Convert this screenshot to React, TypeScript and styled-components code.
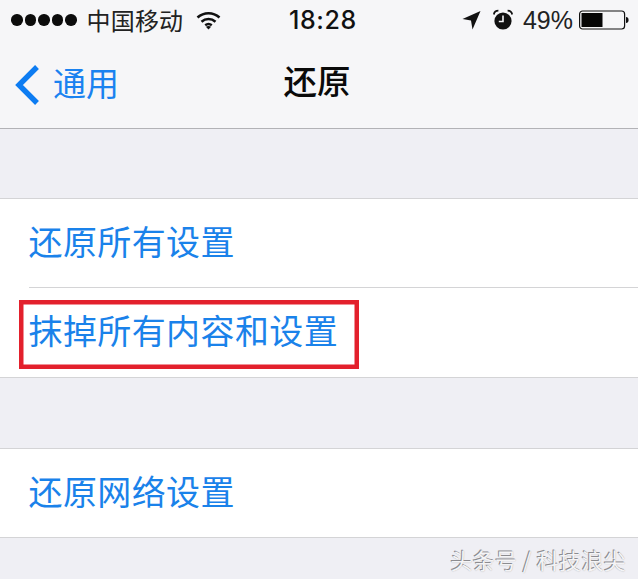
import React from "react";
import styled, { createGlobalStyle } from "styled-components";

const cjk = `"Noto Sans CJK SC", "Noto Sans", sans-serif`;

const Global = createGlobalStyle`
  html, body { margin: 0; padding: 0; background: #efeff4; }
  body { width: 638px; height: 579px; overflow: hidden; font-family: ${cjk}; }
`;

const Page = styled.div`
  position: relative;
  width: 638px;
  height: 579px;
  background: #efeff4;
  display: flex;
  flex-direction: column;
`;

const Header = styled.header`
  height: 128px;
  background: #f6f6f8;
  border-bottom: 1px solid #b2b2b6;
  display: flex;
  flex-direction: column;
`;

const StatusBar = styled.div`
  height: 40px;
  display: grid;
  grid-template-columns: 278px auto 1fr;
  align-items: center;
  padding: 0 9px 0 11px;
  color: #111;
`;

const StatusLeft = styled.div`
  display: flex;
  align-items: center;
`;

const StatusRight = styled.div`
  display: flex;
  align-items: center;
  justify-content: flex-end;
`;

const Dots = styled.div`
  display: flex;
  gap: 2px;
  margin-right: 10px;
`;

const Dot = styled.span`
  width: 11.5px;
  height: 11.5px;
  border-radius: 50%;
  background: #0c0c0c;
`;

const Carrier = styled.span`
  font-size: 24px;
  line-height: 30px;
  letter-spacing: 0.2px;
  color: #222;
  margin-right: 13px;
`;

const Clock = styled.span`
  font-family: "Inter", "Liberation Sans", sans-serif;
  font-size: 25px;
  font-weight: 500;
  letter-spacing: 0.6px;
  color: #111;
`;

const Percent = styled.span`
  font-family: "Liberation Sans", sans-serif;
  font-size: 25px;
  color: #222;
  margin: 0 6px 0 10px;
`;

const NavBar = styled.nav`
  flex: 1;
  position: relative;
  display: flex;
  align-items: center;
  justify-content: center;
`;

const Back = styled.div`
  position: absolute;
  left: 11px;
  top: 23px;
  display: flex;
  align-items: center;
  gap: 13px;
  color: #1a82f0;
  font-size: 33px;
  line-height: 44px;
`;

const BackLabel = styled.span`
  position: relative;
  top: -3px;
`;

const Title = styled.h1`
  margin: 0 4px 8px 0;
  font-size: 33.5px;
  line-height: 44px;
  font-weight: 500;
  color: #0a0a0a;
`;

const Group = styled.section<{ $top: number }>`
  margin-top: ${(p) => p.$top}px;
  background: #fff;
  border-top: 1px solid #d4d4d6;
  border-bottom: 1px solid #d4d4d6;
`;

const Row = styled.div<{ $divider?: boolean; $height?: number }>`
  position: relative;
  box-sizing: border-box;
  height: ${(p) => p.$height ?? 89}px;
  padding: 0 0 6px 28.5px;
  display: flex;
  align-items: center;
  color: #1a82ea;
  font-size: 34px;
  letter-spacing: 0.4px;
  ${(p) =>
    p.$divider
      ? `&::after { content: ""; position: absolute; left: 29px; right: 0; bottom: 0; height: 1px; background: #d4d4d6; }`
      : ""}
`;

const Highlight = styled.div`
  position: absolute;
  left: 19px;
  top: 12px;
  width: 340px;
  height: 69px;
  box-sizing: border-box;
  border: 4px solid #e3202c;
  box-shadow: inset 0 0 0 0.5px #e3202c;
`;

const Watermark = styled.div`
  position: absolute;
  right: 12px;
  bottom: 5px;
  font-size: 22px;
  line-height: 30px;
  color: #f4f4f6;
  letter-spacing: 0.3px;
  text-shadow: -1px -1px 0 #8c8c90, 0 0 1px #a8a8ac;
`;

export default function App() {
  return (
    <Page>
      <Global />
      <Header>
        <StatusBar>
          <StatusLeft>
            <Dots>
              {[0, 1, 2, 3, 4].map((i) => (
                <Dot key={i} />
              ))}
            </Dots>
            <Carrier>中国移动</Carrier>
            <svg width="25" height="19" viewBox="0 0 25 19" fill="none" stroke="#111">
              <path d="M1.5 6.5C8 .8 17 .8 23.5 6.5" strokeWidth="2.6" />
              <path d="M5.5 10.7c4.2-3.6 9.8-3.6 14 0" strokeWidth="2.6" />
              <path d="M9.2 14.2c2-1.5 4.6-1.5 6.6 0" strokeWidth="2.4" />
              <path d="M12.5 18.5l-2.6-2.8c1.6-1 3.6-1 5.2 0z" fill="#111" stroke="none" />
            </svg>
          </StatusLeft>
          <Clock>18:28</Clock>
          <StatusRight>
            <svg width="19" height="20" viewBox="0 0 19 20" style={{ marginRight: 12 }}>
              <path d="M18.5 1L10.5 19.5 9 10.5 .5 9z" fill="#111" />
            </svg>
            <svg width="20" height="22" viewBox="0 0 20 22">
              <circle cx="10" cy="12" r="8.6" fill="#111" />
              <path d="M10 6.5V12.5H5.8" stroke="#f6f6f8" strokeWidth="1.6" fill="none" />
              <path d="M.8 5.5C1.2 3 3 1.6 5.4 1.6M19.2 5.5C18.8 3 17 1.6 14.6 1.6" stroke="#111" strokeWidth="1.8" fill="none" />
            </svg>
            <Percent>49%</Percent>
            <svg width="50" height="20" viewBox="0 0 50 20">
              <rect x=".6" y="1" width="45" height="18" rx="3" fill="none" stroke="#111" strokeWidth="1.2" />
              <rect x="2.5" y="3" width="21" height="14" fill="#060606" />
              <path d="M47 7c1.6 0 2.6 1.2 2.6 3s-1 3-2.6 3z" fill="#111" />
            </svg>
          </StatusRight>
        </StatusBar>
        <NavBar>
          <Back>
            <svg width="29" height="42" viewBox="0 0 29 42" fill="none">
              <path d="M26 3L8 21l18 18" stroke="#0d7cf2" strokeWidth="5.4" />
            </svg>
            <BackLabel>通用</BackLabel>
          </Back>
          <Title>还原</Title>
        </NavBar>
      </Header>
      <Group $top={69}>
        <Row $divider>还原所有设置</Row>
        <Row>
          抹掉所有内容和设置
          <Highlight />
        </Row>
      </Group>
      <Group $top={70}>
        <Row $height={88}>还原网络设置</Row>
      </Group>
      <Watermark>头条号 / 科技浪尖</Watermark>
    </Page>
  );
}
